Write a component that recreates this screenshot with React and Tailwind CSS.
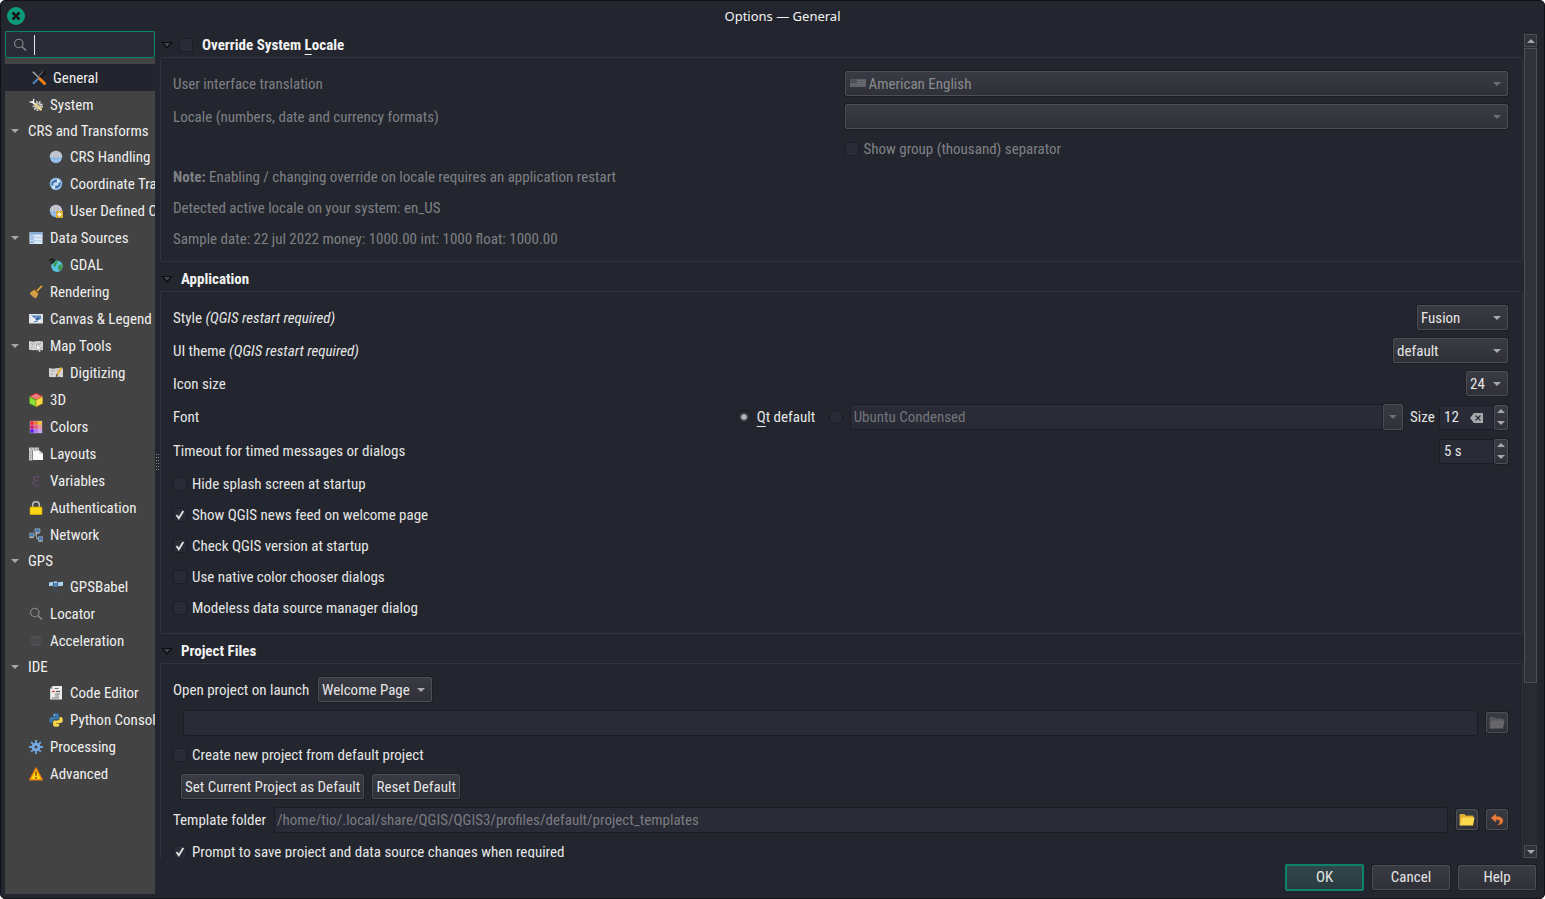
import { useState } from 'react';
import clsx from 'clsx';

const Svg = ({ children, size = 14, className }) => (
  <svg width={size} height={size} viewBox="0 0 14 14" className={clsx('shrink-0', className)} aria-hidden="true">
    {children}
  </svg>
);

const Search = ({ size }) => (
  <Svg size={size}>
    <circle cx="5.8" cy="5.5" r="4.2" fill="none" stroke="#8e8e90" strokeWidth="1.1" />
    <path d="M9 8.8l4 3.8" stroke="#8e8e90" strokeWidth="1.4" />
  </Svg>
);

const Globe = ({ children, top = '#b9bcc0' }) => (
  <Svg>
    <circle cx="7" cy="7" r="6.2" fill="#7fb0e2" />
    <path d="M.8 7a6.2 6.2 0 0 1 12.4 0z" fill={top} />
    <path d="M1 7h12M2 3.8h10M2 10.2h10M7 1v12M4.5 1.5C3 5 3 9 4.5 12.5M9.5 1.5C11 5 11 9 9.5 12.5" fill="none" stroke="#dfe6ee" strokeWidth=".4" />
    {children}
  </Svg>
);

const MapSheet = ({ children }) => (
  <Svg>
    <path d="M0 2l4 .7L9 2l5 .6v8.6l-5-.5-5 .6-4-.6z" fill="#d3d4d3" />
    <path d="M2 4.5l2 1 1.5-1.5M8 4l2 1.5L12 4M2 9l2-1.5M8 7l1.5 1.5" fill="none" stroke="#9b9b9b" strokeWidth=".9" />
    {children}
  </Svg>
);

const ICONS = {
  general: (
    <Svg>
      <path d="M.8.8L7 6.8" stroke="#a3a7ab" strokeWidth="1.4" />
      <path d="M13 .5v2.2L7 8" fill="none" stroke="#15171b" strokeWidth="1.8" />
      <path d="M10.800.3L6.500 5.800" stroke="#6c7075" strokeWidth="1" />
      <path d="M7.500 7.500l5 5" stroke="#f57f17" strokeWidth="3" strokeLinecap="round" />
      <path d="M6.500 7.200L1 12.800" stroke="#4d86c6" strokeWidth="2" />
    </Svg>
  ),
  system: (
    <Svg>
      <circle cx="8.8" cy="8" r="3.600" fill="#b9bcbf" />
      <circle cx="8.8" cy="8" r="4.300" fill="none" stroke="#dcdcdc" strokeWidth="1.600" strokeDasharray="1.700 1.300" />
      <circle cx="8.8" cy="8" r="1.800" fill="#5d6063" />
      <path d="M2.800 3.400l3 2.600" stroke="#ececec" strokeWidth="2" />
      <path d="M4.400.8a2.200 2.200 0 1 1-3.600 2.600" fill="none" stroke="#ececec" strokeWidth="1.400" />
      <path d="M6.500 6.300l5.300 5" stroke="#ecd28a" strokeWidth="2.500" strokeLinecap="round" />
    </Svg>
  ),
  crs: <Globe />,
  transform: (
    <Globe top="#7fb0e2">
      <path d="M3 8c.2-3 2.500-4.500 5-4.200M11 6c-.2 3-2.500 4.500-5 4.200" fill="none" stroke="#2d5f98" strokeWidth="1.500" />
      <path d="M8 2l3 2-3 1.800zM6 8.200l-3 2L6 12zM4.500 6.500h5v1h-5z" fill="#f3f6fa" />
    </Globe>
  ),
  userCrs: (
    <Globe>
      <rect x="7" y="7" width="7" height="7" fill="#d8a92b" />
      <path d="M10.500 8v5M8 10.500h5M8.800 8.800l3.400 3.400M12.200 8.800l-3.400 3.400" stroke="#fff6cf" strokeWidth=".9" />
    </Globe>
  ),
  data: (
    <Svg>
      <rect x=".5" y="1" width="13" height="12" fill="#dce9f7" />
      <rect x=".5" y="1" width="13" height="2.500" fill="#86acd6" />
      <path d="M5 3v10M.5 6.500h13M.5 9.800h13" stroke="#a5c2e4" strokeWidth=".8" />
      <path d="M1.500 5h2.500M1.500 8h2.500M1.500 11.300h2.500" stroke="#5b8fca" strokeWidth="1.200" />
    </Svg>
  ),
  gdal: (
    <Svg>
      <circle cx="8" cy="8.300" r="5.700" fill="#58c3dc" />
      <path d="M4 6c1-2 3-3 4-3l1 2-2 1 .5 2-2 1zM9 8l3-2 1.500 1.500-.5 3L10.500 13 9 11z" fill="#3f9a54" />
      <path d="M0 3l3-2 1.500 2L6 1.500M2 5.500L5.500 3" stroke="#1d1f22" strokeWidth="1.600" fill="none" />
    </Svg>
  ),
  rendering: (
    <Svg>
      <path d="M13 .8L7.500 6.500" stroke="#e3a63a" strokeWidth="1.800" />
      <path d="M5.500 4.500l4 4-2.500 4.700C4.500 12.700 2 10.500.8 8z" fill="#dba44a" />
      <path d="M5.500 4.500l4 4" stroke="#8f5e1f" strokeWidth="1.200" />
      <path d="M4 7.500L2.800 9.500M6 9l-1 2.500" stroke="#b07d33" strokeWidth=".7" />
    </Svg>
  ),
  canvas: (
    <Svg>
      <path d="M0 2h14v9.500H0z" fill="#dde2e6" />
      <path d="M2 3.500h10v6.500H2z" fill="#5b88be" />
      <path d="M2 3.500l3 2.500 2.500-.5L10 8l2-1v3H9L7 8.500 4 10H2z" fill="#eef2f5" />
      <path d="M5.500 6.500l3 2.500 2-3.500z" fill="#2f5f97" />
    </Svg>
  ),
  map: (
    <MapSheet>
      <path d="M7.500 5l5.500 4.500-2.500.3 1 2.700-1.300.4-1-2.500-1.700 1.400z" fill="#f4f4f4" stroke="#8c8c8c" strokeWidth=".5" />
    </MapSheet>
  ),
  digitizing: (
    <MapSheet>
      <path d="M12.500 1.500L8 9" stroke="#e6b13a" strokeWidth="2" />
      <path d="M8.200 8.200L7.400 10.500" stroke="#56401c" strokeWidth="1.200" />
    </MapSheet>
  ),
  cube: (
    <Svg>
      <path d="M7 .3l6.500 3.200L7 7 .5 3.500z" fill="#f37c7f" stroke="#c8232c" strokeWidth=".8" />
      <path d="M.5 3.700L7 7v6.800L.5 10.500z" fill="#8ade3c" stroke="#3f9a1c" strokeWidth=".8" />
      <path d="M13.500 3.700L7 7v6.800l6.500-3.300z" fill="#f8d94a" stroke="#c59a14" strokeWidth=".8" />
    </Svg>
  ),
  colors: (
    <Svg>
      <rect x=".8" y=".8" width="12.400" height="12.400" fill="#c9a0d6" />
      <path d="M1.300 1.300h3.400v3.400H1.300z" fill="#ef2a2a" />
      <path d="M5.300 1.300h3.400v3.400H5.300z" fill="#f57f17" />
      <path d="M9.300 1.300h3.400v3.400H9.300z" fill="#f8c81c" />
      <path d="M1.300 5.300h3.400v3.400H1.300z" fill="#d81b60" />
      <path d="M5.300 5.300h3.400v3.400H5.300z" fill="#e5597c" />
      <path d="M9.300 5.300h3.400v3.400H9.300z" fill="#f19a8a" />
      <path d="M1.300 9.300h3.400v3.400H1.300z" fill="#5a16f0" />
      <path d="M5.300 9.300h3.400v3.400H5.300z" fill="#a57bf2" />
      <path d="M9.300 9.300h3.400v3.400H9.300z" fill="#c4a5f5" />
    </Svg>
  ),
  layouts: (
    <Svg>
      <path d="M0 .5h10v3H3.500v10H0z" fill="#c9c9c9" />
      <path d="M2 2h1M5 2h1M8 2h1M1 5h1M1 8h1M1 11h1" stroke="#7f7f7f" />
      <path d="M4 3.500h6.500L14 6.500V13H4z" fill="#fafafa" />
      <path d="M10.500 3.500L14 6.500h-3.500z" fill="#c2c2c2" />
    </Svg>
  ),
  variables: (
    <Svg>
      <path d="M10.500 3.500C9 1.500 4.500 2 4.800 4.300c.1 1.500 1.800 2.200 3.700 2.200-2.500 0-4.500.8-4.300 2.900.2 2.500 4.500 3 6.500.8" fill="none" stroke="#694a76" strokeWidth="1.300" strokeDasharray="4 1" />
    </Svg>
  ),
  lock: (
    <Svg>
      <path d="M3.700 7V4a3.300 3.300 0 0 1 6.600 0v3" fill="none" stroke="#b9b9b9" strokeWidth="1.600" />
      <rect x="1" y="6" width="12" height="7.700" rx=".8" fill="#f9d513" stroke="#d9a900" strokeWidth=".6" />
    </Svg>
  ),
  network: (
    <Svg>
      <path d="M2.500 7h5v3.500h4M7.500 7V4" fill="none" stroke="#9a9a9a" />
      <path d="M6 .8h5v3.400H6zM0 5.200h5v3.400H0zM9 8.800h5v3.400H9z" fill="#3f75ae" stroke="#a8b4c0" strokeWidth=".7" />
      <path d="M6.500 5.200h4M.5 9.600h4M9.500 13.200h4" stroke="#cfd3d6" strokeWidth=".9" />
    </Svg>
  ),
  gps: (
    <Svg>
      <path d="M0 2.500l4-.8v4L0 6.300zM9 2.200l5-.5v4l-5 .5z" fill="#a9d3f2" />
      <path d="M4.500 1.500h4v5.500h-4z" fill="#4e86bd" />
      <path d="M5 2.200h3" stroke="#e9f3fb" />
      <path d="M4 8.500c.5 2 2 3.500 4.500 3.800M6 8.500c.4 1 1 1.800 2.300 2" fill="none" stroke="#3a5670" strokeWidth=".9" />
    </Svg>
  ),
  locator: <Search />,
  accel: (
    <Svg>
      <path d="M1 4h12M1 7h12M1 10h12M4 1v12M7 1v12M10 1v12" stroke="#4c4c50" strokeWidth=".8" />
      <rect x="2.500" y="2.500" width="9" height="9" fill="#525257" />
      <path d="M3 5h8M3 7h8M3 9h8" stroke="#3f3f44" strokeWidth=".7" />
    </Svg>
  ),
  code: (
    <Svg>
      <path d="M3.500 0H13v13.500H1.200V3z" fill="#ececec" />
      <path d="M3.500 0v3H1.200z" fill="#a9a9a9" />
      <path d="M5.500 2.500h4M6 8h5M6 10h4M3 12h7" stroke="#777" />
      <path d="M3 5.500h3" stroke="#db3b3b" strokeWidth="1.200" />
      <path d="M7 5.500h4" stroke="#555" strokeWidth="1.200" />
    </Svg>
  ),
  python: (
    <Svg>
      <path d="M7 .3c-2.500 0-3 .8-3 1.800v1.400h3.200V4H2.500C1.200 4 .3 5 .3 7s.8 3 2 3h1.200V8.400c0-1 .9-1.900 2-1.900h3c.9 0 1.500-.7 1.500-1.600V2.100C10 1 9 .3 7 .3z" fill="#3c78ae" />
      <path d="M7.200 13.700c2.500 0 3-.8 3-1.800v-1.400H7V10h4.700c1.300 0 2.100-1 2.100-3s-.8-3-2-3h-1.200v1.600c0 1-.9 1.900-2 1.900h-3c-.9 0-1.500.7-1.500 1.600v2.800c0 1.100 1.100 1.800 3.100 1.800z" fill="#f8d548" />
      <circle cx="5.500" cy="2" r=".6" fill="#fff" />
    </Svg>
  ),
  gear: (
    <Svg>
      <path d="M7 0v14M0 7h14M2.100 2.100l9.800 9.800M11.900 2.100l-9.800 9.800" stroke="#6fa3dc" strokeWidth="1.900" />
      <circle cx="7" cy="7" r="4.300" fill="#76a9e0" />
      <circle cx="7" cy="7" r="1.500" fill="#434343" />
    </Svg>
  ),
  warning: (
    <Svg>
      <path d="M7 .9l6.300 12H.7z" fill="#fcd20f" stroke="#ef7d12" strokeWidth="1.200" strokeLinejoin="round" />
      <path d="M7 4.500v4.300M7 10v1.700" stroke="#8a4a10" strokeWidth="1.500" />
    </Svg>
  ),
};

const TREE = [
  { name: 'General', icon: 'general' },
  { name: 'System', icon: 'system' },
  {
    name: 'CRS and Transforms',
    children: [
      { name: 'CRS Handling', icon: 'crs' },
      { name: 'Coordinate Transforms', icon: 'transform' },
      { name: 'User Defined CRS', icon: 'userCrs' },
    ],
  },
  { name: 'Data Sources', icon: 'data', children: [{ name: 'GDAL', icon: 'gdal' }] },
  { name: 'Rendering', icon: 'rendering' },
  { name: 'Canvas & Legend', icon: 'canvas' },
  { name: 'Map Tools', icon: 'map', children: [{ name: 'Digitizing', icon: 'digitizing' }] },
  { name: '3D', icon: 'cube' },
  { name: 'Colors', icon: 'colors' },
  { name: 'Layouts', icon: 'layouts' },
  { name: 'Variables', icon: 'variables' },
  { name: 'Authentication', icon: 'lock' },
  { name: 'Network', icon: 'network' },
  { name: 'GPS', children: [{ name: 'GPSBabel', icon: 'gps' }] },
  { name: 'Locator', icon: 'locator' },
  { name: 'Acceleration', icon: 'accel' },
  {
    name: 'IDE',
    children: [
      { name: 'Code Editor', icon: 'code' },
      { name: 'Python Console', icon: 'python' },
    ],
  },
  { name: 'Processing', icon: 'gear' },
  { name: 'Advanced', icon: 'warning' },
];

const FIELD = 'rounded-[2px] border border-[#1b1d24] bg-[#292b36] outline-none';
const RAISED = 'rounded-[2px] border border-[#4d4f57] bg-linear-to-b from-[#393b44] to-[#303037] shadow-[0_0_0_1px_#1c1e25]';

const Arrow = ({ up, dim }) => (
  <svg width="8" height="4" viewBox="0 0 8 4" aria-hidden="true" className="block">
    <path d={up ? 'M0 4h8L4 0z' : 'M0 0h8L4 4z'} fill={dim ? '#6d6e74' : '#a7a8ab'} />
  </svg>
);

function TreeItem({ item, depth = 0, active, onSelect }) {
  const [open, setOpen] = useState(true);
  const selected = item.name === active;
  return (
    <li>
      <div
        className={clsx(
          'flex items-center',
          item.icon ? 'h-[27px]' : 'h-[25px]',
          depth > 0 && 'pl-5',
          selected && 'bg-[#23252e] pl-[3px]'
        )}
      >
        <span className="flex w-[23px] shrink-0 pl-[6px]">
          {item.children && (
            <button aria-label={`Toggle ${item.name}`} onClick={() => setOpen(!open)}>
              <Arrow />
            </button>
          )}
        </span>
        <button className="flex items-center gap-[6px] whitespace-nowrap" onClick={() => onSelect(item.name)}>
          {item.icon && <span className="flex w-4 justify-center">{ICONS[item.icon]}</span>}
          {item.name}
        </button>
      </div>
      {item.children && open && (
        <ul>
          {item.children.map((c) => (
            <TreeItem key={c.name} item={c} depth={depth + 1} active={active} onSelect={onSelect} />
          ))}
        </ul>
      )}
    </li>
  );
}

function Check({ label, disabled, defaultChecked, className }) {
  return (
    <label className={clsx('flex items-center gap-[5px]', disabled && 'text-[#7f8085]', className)}>
      <span className="grid size-[14px] shrink-0 place-items-center">
        <input
          type="checkbox"
          disabled={disabled}
          defaultChecked={defaultChecked}
          className="peer col-start-1 row-start-1 size-[14px] appearance-none border border-[#1c1e25] bg-[#292b36]"
        />
        <svg width="10" height="10" viewBox="0 0 10 10" aria-hidden="true" className="pointer-events-none col-start-1 row-start-1 hidden peer-checked:block">
          <path d="M1.500 5l2.300 3.300L8.300 1" fill="none" stroke="#dedfe0" strokeWidth="1.900" />
        </svg>
      </span>
      {label}
    </label>
  );
}

function Select({ id, value, disabled, className, icon, label }) {
  return (
    <span className={clsx('relative flex', className)}>
      <select
        id={id}
        aria-label={label}
        disabled={disabled}
        className={clsx(
          'h-[25px] w-full appearance-none pr-5 opacity-100 outline-none',
          icon ? 'pl-[23px]' : 'pl-[3px]',
          disabled && 'text-[#8a8b90]',
          RAISED
        )}
      >
        <option>{value}</option>
      </select>
      {icon && <span className="pointer-events-none absolute top-2 left-[5px]">{icon}</span>}
      <span className="pointer-events-none absolute top-[11px] right-[7px]">
        <Arrow dim={disabled} />
      </span>
    </span>
  );
}

function Spin({ id, label, value, clearable }) {
  return (
    <span className="relative flex h-[25px] w-[69px] shrink-0">
      <input id={id} aria-label={label} defaultValue={value} className={clsx('min-w-0 flex-1 rounded-r-none pl-1', FIELD)} />
      {clearable && (
        <button aria-label="Clear" className="absolute top-2 left-[31px]">
          <svg width="13" height="10" viewBox="0 0 13 10" aria-hidden="true" className="block">
            <path d="M4 0h9v10H4L0 5z" fill="#a7a8ab" />
            <path d="M5.500 2.500l5 5M10.500 2.500l-5 5" stroke="#292b36" strokeWidth="1.200" />
          </svg>
        </button>
      )}
      <span className={clsx('flex w-[14px] flex-col', RAISED)}>
        <button aria-label="Increase" className="flex flex-1 items-center justify-center"><Arrow up /></button>
        <button aria-label="Decrease" className="flex flex-1 items-center justify-center"><Arrow /></button>
      </span>
    </span>
  );
}

function Group({ title, check, children, className }) {
  return (
    <section className="mb-[3px] shrink-0">
      <h2 className="flex h-[26px] items-center pt-px font-bold text-[#f2f2f2]">
        <button aria-label="Collapse group" className="mr-2 ml-px">
          <svg width="12" height="8" viewBox="0 0 12 8" aria-hidden="true" className="block">
            <path d="M1.500 1.500h9L6 7z" fill="#45464a" stroke="#0b0c0f" strokeWidth="1.200" />
          </svg>
        </button>
        {check && (
          <input type="checkbox" aria-label="Override System Locale" className="mr-[9px] -ml-[2px] size-[14px] appearance-none border border-[#1c1e25] bg-[#292b36]" />
        )}
        {title}
      </h2>
      <div className={clsx('rounded-[2px] border border-[#31343c] px-3 pt-[9px] pr-[14px]', className)}>{children}</div>
    </section>
  );
}

const Flag = (
  <svg width="16" height="8" viewBox="0 0 16 8" aria-hidden="true" className="block">
    <rect width="16" height="8" fill="#606166" />
    <rect width="7" height="4" fill="#4f5056" />
    <path d="M7 1.500h9M7 3.500h9M0 5.500h16" stroke="#6d6e73" strokeWidth=".7" />
  </svg>
);

const Folder = ({ dim }) => (
  <svg width="16" height="14" viewBox="0 0 16 14" aria-hidden="true">
    <path d="M1 12.500V1.500h4.500l1 1.500H14v2" fill={dim ? '#55565a' : '#e0a92c'} stroke={dim ? '#5d5e62' : '#e8b93c'} strokeWidth=".8" />
    <path d="M1 12.500L2.500 4.500h13l-1.500 8z" fill={dim ? '#66676a' : '#fbd84c'} />
  </svg>
);

const TOOL = clsx('flex h-[21px] w-[22px] shrink-0 items-center justify-center', RAISED);
const PUSH = clsx('h-[25px] px-[3px] whitespace-nowrap', RAISED);

export default function App() {
  const [page, setPage] = useState('General');

  return (
    <div className="h-screen bg-white">
      <div className="flex h-full flex-col rounded-[5px] border border-[#101116] bg-[#23262e] px-1 pb-1 font-['Ubuntu_Condensed','Roboto_Condensed','Liberation_Sans_Narrow',sans-serif] text-[15px] leading-5 text-[#e6e6e6]">
        <header className="grid h-[30px] shrink-0 grid-cols-[1fr_auto_1fr] items-center">
          <button aria-label="Close" className="ml-[2px] size-[18px]">
            <svg width="18" height="18" viewBox="0 0 18 18" aria-hidden="true">
              <circle cx="9" cy="9" r="9" fill="#0d9b7b" />
              <path d="M5.500 5.500l7 7M12.500 5.500l-7 7" stroke="#16181d" strokeWidth="2.600" />
            </svg>
          </button>
          <h1 className="pl-5 font-['Noto_Sans',sans-serif] text-[13px] text-[#f4f4f4]">Options — General</h1>
        </header>

        <div className="flex min-h-0 flex-1">
          <nav className="flex w-[150px] shrink-0 flex-col overflow-hidden bg-[#434343] text-[#f0f0f0]">
            <label className="flex h-[27px] shrink-0 items-center rounded-[2px] border border-[#0c8467] bg-[#292b36] pl-[7px]">
              <Search />
              <span className="ml-[7px] h-5 w-px bg-[#e6e6e6]" />
              <input aria-label="Search options" className="min-w-0 flex-1 bg-transparent caret-transparent outline-none" />
            </label>
            <ul className="mt-[6px]">
              {TREE.map((item) => (
                <TreeItem key={item.name} item={item} active={page} onSelect={setPage} />
              ))}
            </ul>
          </nav>

          <div className="flex w-[5px] shrink-0 items-center justify-center" role="separator">
            <svg width="3" height="18" viewBox="0 0 3 18" aria-hidden="true">
              <path d="M.5 0v18M2.500 0v18" stroke="#85868a" strokeDasharray="1 2" />
            </svg>
          </div>

          <div className="flex min-w-0 flex-1 flex-col">
            <div className="flex min-h-0 flex-1">
              <main className="flex min-w-0 flex-1 flex-col overflow-hidden">
                <Group check className="pb-[7px] text-[#7f8085]" title={<span>Override System <span className="underline underline-offset-4">L</span>ocale</span>}>
                  <div className="grid grid-cols-2 items-center gap-x-2">
                    <label htmlFor="lang">User interface translation</label>
                    <div className="flex h-[33px] items-center">
                      <Select id="lang" disabled className="w-full" value="American English" icon={Flag} />
                    </div>
                    <label htmlFor="locale">Locale (numbers, date and currency formats)</label>
                    <div className="flex h-[33px] items-center">
                      <Select id="locale" disabled className="w-full" value="" />
                    </div>
                    <Check disabled label="Show group (thousand) separator" className="col-start-2 -mb-[3px] h-[31px]" />
                  </div>
                  <p className="flex h-[31px] items-center"><span><b>Note:</b> Enabling / changing override on locale requires an application restart</span></p>
                  <p className="flex h-[31px] items-center">Detected active locale on your system: en_US</p>
                  <p className="flex h-[31px] items-center">Sample date: 22 jul 2022 money: 1000.00 int: 1000 float: 1000.00</p>
                </Group>

                <Group title="Application" className="pb-[10px]">
                  <div className="flex h-[33px] items-center justify-between">
                    <label htmlFor="style">Style <i>(QGIS restart required)</i></label>
                    <Select id="style" value="Fusion" className="w-[91px]" />
                  </div>
                  <div className="flex h-[33px] items-center justify-between">
                    <label htmlFor="theme">UI theme <i>(QGIS restart required)</i></label>
                    <Select id="theme" value="default" className="w-[115px]" />
                  </div>
                  <div className="flex h-[33px] items-center justify-between">
                    <label htmlFor="iconsize">Icon size</label>
                    <Select id="iconsize" value="24" className="w-[42px]" />
                  </div>
                  <div className="flex h-[34px] items-center">
                    <span className="w-[42%] shrink-0">Font</span>
                    <label className="flex shrink-0 items-center gap-[6px]">
                      <input
                        type="radio"
                        name="font"
                        defaultChecked
                        className="ml-[3px] size-[14px] appearance-none rounded-full border border-[#1b1d24] bg-[#292b36] checked:bg-[radial-gradient(circle,#b4b5b7_2px,#292b36_4px)]"
                      />
                      <span className="w-[60px] whitespace-nowrap"><span className="underline underline-offset-4">Q</span>t default</span>
                    </label>
                    <input
                      type="radio"
                      name="font"
                      aria-label="Custom font"
                      className="mr-[7px] ml-3 size-[14px] shrink-0 appearance-none rounded-full border border-[#1b1d24] bg-[#292b36]"
                    />
                    <span className="flex h-[26px] min-w-0 flex-1">
                      <input aria-label="Font family" disabled defaultValue="Ubuntu Condensed" className={clsx('min-w-0 flex-1 rounded-r-none pl-[3px] text-[#75767b]', FIELD)} />
                      <button aria-label="Choose font" disabled className={clsx('flex w-5 items-center justify-center', RAISED)}><Arrow dim /></button>
                    </span>
                    <label htmlFor="fontsize" className="w-9 shrink-0 pl-[7px]">Size</label>
                    <Spin id="fontsize" value="12" clearable />
                  </div>
                  <div className="flex h-[34px] items-center justify-between">
                    <label htmlFor="timeout">Timeout for timed messages or dialogs</label>
                    <Spin id="timeout" value="5 s" />
                  </div>
                  <Check className="h-[31px]" label="Hide splash screen at startup" />
                  <Check className="h-[31px]" label="Show QGIS news feed on welcome page" defaultChecked />
                  <Check className="h-[31px]" label="Check QGIS version at startup" defaultChecked />
                  <Check className="h-[31px]" label="Use native color chooser dialogs" />
                  <Check className="h-[31px]" label="Modeless data source manager dialog" />
                </Group>

                <Group title="Project Files" className="pb-[10px]">
                  <div className="flex h-[33px] items-center gap-2">
                    <label htmlFor="launch" className="w-[137px] whitespace-nowrap">Open project on launch</label>
                    <Select id="launch" value="Welcome Page" className="w-[114px]" />
                  </div>
                  <div className="flex h-[33px] items-center gap-2 pl-[10px]">
                    <input aria-label="Project path" disabled className={clsx('h-[26px] min-w-0 flex-1 px-[3px]', FIELD)} />
                    <button aria-label="Browse project" disabled className={TOOL}><Folder dim /></button>
                  </div>
                  <Check className="h-[31px]" label="Create new project from default project" />
                  <div className="flex h-[33px] items-center gap-2 pl-2">
                    <button className={clsx('min-w-[183px]', PUSH)}>Set Current Project as Default</button>
                    <button className={clsx('min-w-[88px]', PUSH)}>Reset Default</button>
                  </div>
                  <div className="flex h-[33px] items-center gap-2">
                    <label htmlFor="template" className="w-[93px] shrink-0 whitespace-nowrap">Template folder</label>
                    <input
                      id="template"
                      placeholder="/home/tio/.local/share/QGIS/QGIS3/profiles/default/project_templates"
                      className={clsx('h-[26px] min-w-0 flex-1 px-[2px] placeholder:text-[#7b7c81] placeholder:opacity-100', FIELD)}
                    />
                    <button aria-label="Browse template folder" className={TOOL}><Folder /></button>
                    <button aria-label="Reset template folder" className={TOOL}>
                      <Svg>
                        <path d="M6 .8L1 5l5 4.200V6.600c3 0 4 .9 3.800 2.400-.1 1.200-.9 2-2.300 2.800 3.300.2 5.500-1.300 5.500-4 0-2.800-2.500-4.300-7-4.300z" fill="#e77c3c" stroke="#c4602a" strokeWidth=".5" />
                      </Svg>
                    </button>
                  </div>
                  <Check className="h-[31px]" label="Prompt to save project and data source changes when required" defaultChecked />
                </Group>
              </main>

              <div className="mt-[3px] mr-[3px] ml-px flex w-[13px] shrink-0 flex-col gap-px bg-[#292b31]">
                <button aria-label="Scroll up" className="flex h-[13px] items-center justify-center border border-[#4d4f57] bg-[#31323a]"><Arrow up /></button>
                <div className="flex-[635] border border-[#4d4f57] bg-[#31323a]" />
                <div className="flex-[161]" />
                <button aria-label="Scroll down" className="flex h-[13px] items-center justify-center border border-[#4d4f57] bg-[#31323a]"><Arrow /></button>
              </div>
            </div>

            <footer className="flex h-9 shrink-0 items-center justify-end gap-2 pt-[2px] pr-1">
              <button className="h-[27px] w-[79px] rounded-[2px] border-2 border-[#0c8467] bg-linear-to-b from-[#31474b] to-[#2a3b40]">OK</button>
              <button className={clsx('w-[78px]', PUSH)}>Cancel</button>
              <button className={clsx('w-[78px]', PUSH)}>Help</button>
            </footer>
          </div>
        </div>
      </div>
    </div>
  );
}
